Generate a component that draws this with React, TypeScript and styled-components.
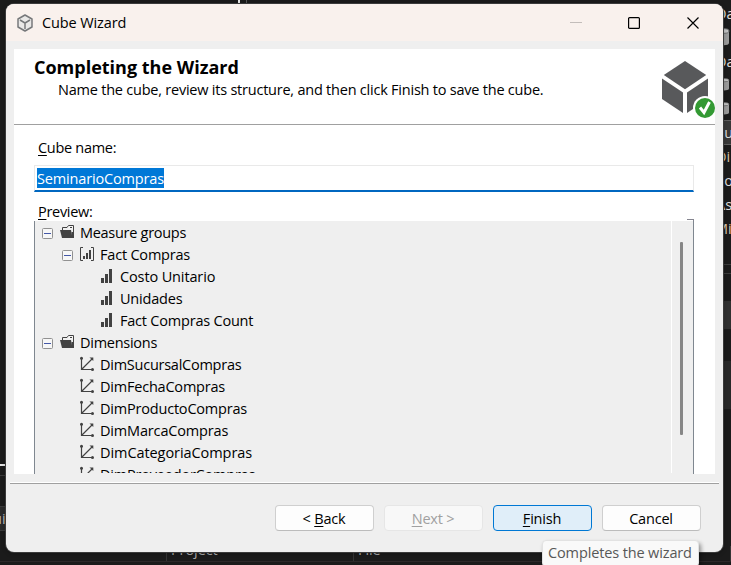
import React from 'react';
import styled, { createGlobalStyle } from 'styled-components';

const GlobalStyle = createGlobalStyle`
  * { box-sizing: border-box; }
  body {
    margin: 0;
    overflow: hidden;
    background: #1b1b1b;
    color: #000;
    font: 14.5px/20px "Open Sans", "Noto Sans", sans-serif;
  }
`;

const Desktop = styled.div`
  position: relative;
  width: 731px;
  height: 565px;
  overflow: hidden;
`;

/* Editor window behind the dialog */
const Backdrop = styled.div`
  display: flex;
  flex-direction: column;
  height: 565px;
  background: #1b1b1b;
`;
const TopStrip = styled.div`
  display: flex;
  flex: none;
  height: 4px;
  padding-left: 238px;
  gap: 6px;
`;
const Splitter = styled.div<{ $color: string; $w: number }>`
  width: ${p => p.$w}px;
  background: ${p => p.$color};
`;
const BackBody = styled.div`
  display: flex;
  flex: none;
  height: 542px;
  justify-content: space-between;
`;
const LeftEdge = styled.div`
  width: 14px;
  padding-top: 460px;
`;
const LeftRule = styled.div<{ $c: string; $h: number; $gap: number }>`
  height: ${p => p.$h}px;
  margin-bottom: ${p => p.$gap}px;
  background: ${p => p.$c};
`;
const LeftTab = styled.div`
  height: 25px;
  border: solid #3a3a3a;
  border-width: 1px 0;
  background: #2b2b2b;
  color: #bdbdbd;
  text-indent: -7px;
  line-height: 24px;
`;
const RightEdge = styled.div`
  width: 16px;
`;
const ExplorerRow = styled.div<{ $h: number; $active?: boolean; $shift?: number; $warm?: boolean }>`
  display: flex;
  align-items: center;
  height: ${p => p.$h}px;
  padding-left: ${p => p.$shift ?? 0}px;
  background: ${p => (p.$active ? '#383838' : 'transparent')};
  border: solid ${p => (p.$active ? '#606060' : 'transparent')};
  border-width: 1px 0;
  color: ${p => (p.$warm ? '#d9c4ab' : '#dedede')};
  white-space: nowrap;
  svg { flex: none; }
`;
const EdgePanel = styled.div<{ $h: number; $c: string; $line?: boolean }>`
  height: ${p => p.$h}px;
  background: ${p => p.$c};
  border-top: ${p => (p.$line ? '1px solid #3c3c3c' : 'none')};
`;
const ColumnHeads = styled.div`
  display: grid;
  flex: none;
  grid-template-columns: 167px 187px 1fr;
  height: 16px;
  border-bottom: 1px solid #2d292a;
  color: #a9a9a9;
`;
const ColumnHead = styled.div`
  padding-left: 4px;
  border-right: 1px solid #343434;
  line-height: 7px;
  letter-spacing: -0.1px;
`;

/* Dialog */
const Dialog = styled.section`
  position: absolute;
  left: 6px;
  top: 4px;
  display: flex;
  flex-direction: column;
  width: 717px;
  height: 548px;
  overflow: hidden;
  border-radius: 8px;
  background: #efefef;
  box-shadow: 0 0 0 1px #3b3b3b, 0 1px 5px rgba(0, 0, 0, 0.3);
`;
const TitleBar = styled.header`
  display: flex;
  flex: none;
  align-items: center;
  height: 37px;
  padding-left: 11px;
  background: #f9f1ed;
`;
const WindowTitle = styled.h1`
  flex: 1;
  margin: 0 0 0 9px;
  font-size: 14.5px;
  font-weight: 400;
  letter-spacing: -0.12px;
`;
const Captions = styled.div`
  display: flex;
  padding-right: 24px;
`;
const Caption = styled.button`
  display: flex;
  padding: 0;
  margin-left: 46px;
  border: 0;
  background: none;
  &:last-child { margin-left: 47px; }
`;
const Page = styled.main`
  flex: none;
  height: 425px;
  margin: 8px 8px 0;
  background: #fff;
`;
const Banner = styled.div`
  display: flex;
  justify-content: space-between;
  height: 76px;
  padding: 8px 0 0 20px;
  border-bottom: 1px solid #a0a0a0;
`;
const Heading = styled.h2`
  margin: 0;
  font-size: 18px;
  font-weight: 700;
  line-height: 20px;
  letter-spacing: 0;
`;
const Subheading = styled.p`
  margin: 3px 0 0 24px;
  white-space: nowrap;
  letter-spacing: -0.225px;
`;
const BannerArt = styled.svg`
  margin-top: 2px;
`;
const Form = styled.div`
  display: flex;
  flex-direction: column;
  height: 349px;
  padding: 13px 21px 0 20px;
`;
const Label = styled.label`
  height: 20px;
  padding-left: 4px;
  letter-spacing: -0.3px;
`;
const Mnemonic = styled.span`
  text-decoration: underline;
  text-decoration-thickness: 1px;
  text-underline-offset: 2px;
`;
const NameField = styled.div`
  flex: none;
  height: 27px;
  margin: 7px 0 10px;
  padding: 2px 2px 0;
  border: 1px solid #e9e9e9;
  border-bottom: 2px solid #0067c0;
`;
const Selection = styled.span`
  display: inline-block;
  height: 20px;
  background: #0078d7;
  color: #fff;
  line-height: 22px;
  letter-spacing: -0.16px;
`;
const BoxCorner = styled.div`
  flex: none;
  align-self: flex-end;
  width: 7px;
  height: 2px;
  margin-top: -3px;
  border: solid #85858f;
  border-width: 1px 1px 0 0;
`;
const Preview = styled.div`
  display: flex;
  flex: none;
  height: 253px;
  border: solid #7f8790;
  border-width: 0 1px;
  background: #efefef;
`;
const Tree = styled.div`
  flex: 1;
  height: 252px;
  padding-left: 7px;
  overflow: hidden;
`;
const TreeRow = styled.div<{ $indent: number }>`
  display: flex;
  align-items: center;
  height: 22px;
  padding-left: ${p => p.$indent}px;
  svg { flex: none; }
`;
const TreeText = styled.span<{ $track: number }>`
  margin-left: 5px;
  padding-top: 1px;
  white-space: nowrap;
  letter-spacing: ${p => p.$track}px;
`;
const ScrollTrack = styled.div`
  width: 22px;
  height: 252px;
  padding: 21px 0 0 8px;
  border-left: 1px solid #fff;
`;
const ScrollThumb = styled.div`
  width: 3px;
  height: 193px;
  border-radius: 1px;
  background: #868686;
`;
const Footer = styled.footer`
  display: flex;
  flex: 1;
  align-items: flex-start;
  justify-content: flex-end;
  gap: 10px;
  margin: 9px 4px 0;
  padding: 21px 18px 0 0;
  border-top: 1px solid #a0a0a0;
  box-shadow: 0 -1px #fff;
`;
const tones = {
  normal: ['#fdfdfd', '#cfcfcf', '#bcbcbc', '#000'],
  disabled: ['#f8f8f8', '#e6e6e6', '#e6e6e6', '#a0a0a0'],
  primary: ['#e0eef9', '#0078d4', '#0078d4', '#000'],
};
const Button = styled.button<{ $tone?: keyof typeof tones }>`
  width: 99px;
  height: 26px;
  padding: 1px 1px 0 0;
  border: 1px solid ${p => tones[p.$tone ?? 'normal'][1]};
  border-bottom-color: ${p => tones[p.$tone ?? 'normal'][2]};
  border-radius: 4px;
  background: ${p => tones[p.$tone ?? 'normal'][0]};
  color: ${p => tones[p.$tone ?? 'normal'][3]};
  font: inherit;
  letter-spacing: -0.2px;
`;
const Tooltip = styled.div`
  position: absolute;
  left: 542px;
  top: 540px;
  width: 157px;
  height: 27px;
  padding: 2px 0 0 5px;
  border: 1px solid #e2e2e2;
  border-radius: 4px;
  background: #f9f9f9;
  box-shadow: 2px 3px 4px rgba(0, 0, 0, 0.4);
  color: #575757;
  white-space: nowrap;
  letter-spacing: -0.13px;
`;

const Cylinder = ({ h }: { h: number }) => (
  <svg width="10" height={h} viewBox="0 0 10 18" preserveAspectRatio="none">
    <path d="M-1 3v12c0 3 10 3 10 0V3z" fill="#9b9b9b" />
    <ellipse cx="4" cy="3" rx="5" ry="2.3" fill="#c4c4c4" stroke="#6d6d6d" />
  </svg>
);

const CubeOutline = () => (
  <svg width="16" height="18" viewBox="0 0 16 18" fill="#e9e8e7" stroke="#77797b" strokeWidth="1.5" strokeLinejoin="round">
    <path d="M8 1l7 4v8l-7 4-7-4V5z" />
    <path d="M3 6l5 3 5-3M8 9v6" fill="none" />
  </svg>
);

const ExpanderBox = styled.svg`
  margin: 2px 7px 0 0;
`;
const Expander = () => (
  <ExpanderBox width="11" height="11" viewBox="0 0 11 11">
    <rect x=".5" y=".5" width="10" height="10" rx="1" fill="#f7f7f7" stroke="#919191" />
    <path d="M2 5.5h7" stroke="#4458a8" />
  </ExpanderBox>
);

type IconName = 'folder' | 'group' | 'bars' | 'axes';
const TreeIcon = ({ name }: { name: IconName }) => (
  <svg width="15" height="16" viewBox="0 0 15 16">
    {name === 'folder' && (
      <>
        <path d="M2.5 6V3.5H7l1.5-2h5V13" fill="none" stroke="#424242" />
        <path d="M9 2h4v3H8z" fill="#f4f4f4" />
        <path d="M0 6h11l1.500 8H2z" fill="#424242" />
        <path d="M11.500 8H14v6h-2.500z" fill="#424242" />
        <path d="M10 3.5h2" stroke="#424242" />
      </>
    )}
    {name === 'group' && (
      <>
        <path d="M3 1.5H.5v13H3M11 1.5h2.5v13H11" fill="none" stroke="#424242" />
        <path d="M3 10h2v3H3zM6 7h2v6H6zM9 4h2v9H9z" fill="#424242" />
      </>
    )}
    {name === 'bars' && <path d="M1 10h3v5H1zM5 6h3v9H5zM9 1h3v14H9z" fill="#424242" />}
    {name === 'axes' && (
      <>
        <path d="M1.5 2v11.5H13M2 13L12 3" fill="none" stroke="#424242" strokeWidth="1.2" />
        <circle cx="1.5" cy="2.3" r="1.5" fill="#424242" />
        <circle cx="12.5" cy="13.500" r="1.5" fill="#424242" />
        <path d="M9.500 1.500H13.300V5z" fill="#424242" />
      </>
    )}
  </svg>
);

interface Node {
  text: string;
  indent: number;
  icon: IconName;
  track: number;
  open?: boolean;
}
const nodes: Node[] = [
  { text: 'Measure groups', indent: 0, icon: 'folder', track: -0.29, open: true },
  { text: 'Fact Compras', indent: 20, icon: 'group', track: -0.2, open: true },
  { text: 'Costo Unitario', indent: 58, icon: 'bars', track: -0.13 },
  { text: 'Unidades', indent: 58, icon: 'bars', track: -0.2 },
  { text: 'Fact Compras Count', indent: 58, icon: 'bars', track: -0.21 },
  { text: 'Dimensions', indent: 0, icon: 'folder', track: -0.27, open: true },
  { text: 'DimSucursalCompras', indent: 38, icon: 'axes', track: -0.25 },
  { text: 'DimFechaCompras', indent: 38, icon: 'axes', track: -0.21 },
  { text: 'DimProductoCompras', indent: 38, icon: 'axes', track: -0.2 },
  { text: 'DimMarcaCompras', indent: 38, icon: 'axes', track: -0.17 },
  { text: 'DimCategoriaCompras', indent: 38, icon: 'axes', track: -0.07 },
  { text: 'DimProveedorCompras', indent: 38, icon: 'axes', track: -0.2 },
];

export default function App() {
  return (
    <Desktop>
      <GlobalStyle />
      <Backdrop>
        <TopStrip>
          <Splitter $w={2} $color="#e8e8e8" />
          <Splitter $w={1} $color="#555" />
        </TopStrip>
        <BackBody>
          <LeftEdge>
            <LeftRule $c="#e4e4e4" $h={2} $gap={9} />
            <LeftRule $c="#3a3a3a" $h={1} $gap={30} />
            <LeftTab>ui</LeftTab>
          </LeftEdge>
          <RightEdge>
            <ExplorerRow $h={20} $shift={1}><span>Da</span></ExplorerRow>
            <ExplorerRow $h={26} $shift={5}><Cylinder h={18} /></ExplorerRow>
            <ExplorerRow $h={23} $shift={1}><span>Da</span></ExplorerRow>
            <ExplorerRow $h={23} $shift={5}><Cylinder h={13} /></ExplorerRow>
            <ExplorerRow $h={24} $shift={5}><Cylinder h={13} /></ExplorerRow>
            <ExplorerRow $h={25} $active $shift={-1}><span>Cu</span></ExplorerRow>
            <ExplorerRow $h={24} $warm $shift={1}><span>Di</span></ExplorerRow>
            <ExplorerRow $h={24}><span>Co</span></ExplorerRow>
            <ExplorerRow $h={24} $shift={1}><span>As</span></ExplorerRow>
            <ExplorerRow $h={24} $warm><span>Mi</span></ExplorerRow>
            <EdgePanel $h={23} $c="#1b1b1b" />
            <EdgePanel $h={9} $c="#1b1b1b" $line />
            <EdgePanel $h={28} $c="#1b1b1b" $line />
            <EdgePanel $h={28} $c="#303030" />
            <EdgePanel $h={32} $c="#1b1b1b" />
            <EdgePanel $h={48} $c="#282828" />
          </RightEdge>
        </BackBody>
        <ColumnHeads>
          <ColumnHead />
          <ColumnHead>Project</ColumnHead>
          <ColumnHead>File</ColumnHead>
        </ColumnHeads>
      </Backdrop>

      <Dialog>
        <TitleBar>
          <CubeOutline />
          <WindowTitle>Cube Wizard</WindowTitle>
          <Captions>
            <Caption aria-label="Minimize">
              <svg width="12" height="12"><path d="M0 5.5h12" stroke="#c3bdba" /></svg>
            </Caption>
            <Caption aria-label="Maximize">
              <svg width="12" height="12"><rect x=".6" y=".6" width="10.8" height="10.8" rx="1" fill="none" stroke="#000" strokeWidth="1.2" /></svg>
            </Caption>
            <Caption aria-label="Close">
              <svg width="12" height="12"><path d="M.5.5l11 11M11.5.5l-11 11" stroke="#000" strokeWidth="1.15" /></svg>
            </Caption>
          </Captions>
        </TitleBar>

        <Page>
          <Banner>
            <div>
              <Heading>Completing the Wizard</Heading>
              <Subheading>Name the cube, review its structure, and then click Finish to save the cube.</Subheading>
            </div>
            <BannerArt width="53" height="60" viewBox="0 0 53 60">
              <g fill="#58595b">
                <path d="M23 2L44.2 16 23 30.3 1.8 16z" />
                <path d="M0 19.5L21 33.5V54L0 40z" />
                <path d="M46 19.5L25 33.5V54L46 40z" />
              </g>
              <circle cx="43" cy="49" r="12" fill="#fff" />
              <circle cx="43" cy="49" r="10" fill="#339933" />
              <path d="M38 48.5l4 5 5.5-10.5" fill="none" stroke="#fff" strokeWidth="2.9" />
            </BannerArt>
          </Banner>
          <Form>
            <Label><Mnemonic>C</Mnemonic>ube name:</Label>
            <NameField><Selection>SeminarioCompras</Selection></NameField>
            <Label><Mnemonic>P</Mnemonic>review:</Label>
            <BoxCorner />
            <Preview>
              <Tree>
                {nodes.map(n => (
                  <TreeRow key={n.text} $indent={n.indent}>
                    {n.open && <Expander />}
                    <TreeIcon name={n.icon} />
                    <TreeText $track={n.track}>{n.text}</TreeText>
                  </TreeRow>
                ))}
              </Tree>
              <ScrollTrack><ScrollThumb /></ScrollTrack>
            </Preview>
          </Form>
        </Page>

        <Footer>
          <Button>&lt; <Mnemonic>B</Mnemonic>ack</Button>
          <Button $tone="disabled" disabled><Mnemonic>N</Mnemonic>ext &gt;</Button>
          <Button $tone="primary"><Mnemonic>F</Mnemonic>inish</Button>
          <Button>Cancel</Button>
        </Footer>
      </Dialog>
      <Tooltip role="tooltip">Completes the wizard</Tooltip>
    </Desktop>
  );
}
